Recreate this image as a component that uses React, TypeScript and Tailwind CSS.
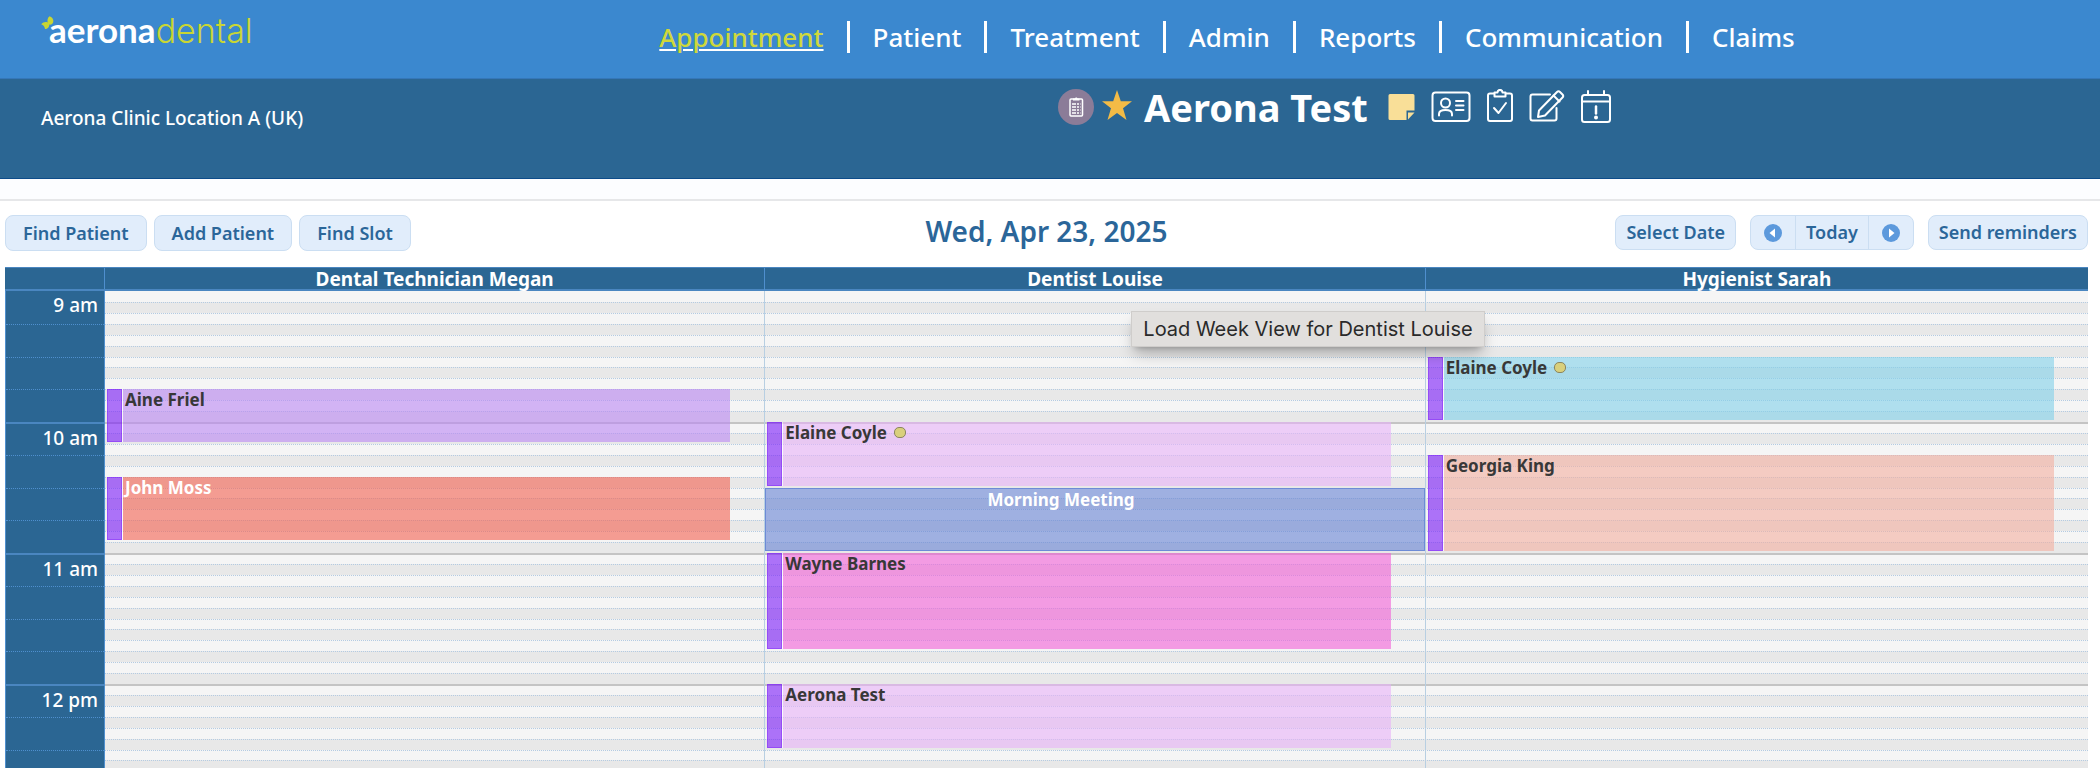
import { Fragment } from 'react';
import type { ReactNode } from 'react';

interface CalendarEvent {
  name: string;
  start: number;
  end: number;
  color: string;
  light?: boolean;
  flagged?: boolean;
  block?: boolean;
}

interface Provider {
  name: string;
  tooltip?: string;
  events: CalendarEvent[];
}

const NAV_ITEMS = ['Appointment', 'Patient', 'Treatment', 'Admin', 'Reports', 'Communication', 'Claims'];

const HOURS = ['9 am', '10 am', '11 am', '12 pm'];
const SLOTS_PER_HOUR = 12;
const SLOTS = Array.from({ length: SLOTS_PER_HOUR }, (_, i) => i);

// start and end are counted in five minute slots from 9 am
const PROVIDERS: Provider[] = [
  {
    name: 'Dental Technician Megan',
    events: [
      { name: 'Aine Friel', start: 9, end: 14, color: 'bg-[#ba87f3]/60' },
      { name: 'John Moss', start: 17, end: 23, color: 'bg-[#f36050]/60', light: true },
    ],
  },
  {
    name: 'Dentist Louise',
    tooltip: 'Load Week View for Dentist Louise',
    events: [
      { name: 'Elaine Coyle', start: 12, end: 18, color: 'bg-[#e7b2f8]/60', flagged: true },
      { name: 'Morning Meeting', start: 18, end: 24, color: 'bg-[#6582d3]/60', block: true },
      { name: 'Wayne Barnes', start: 24, end: 33, color: 'bg-[#f15fd7]/60' },
      { name: 'Aerona Test', start: 36, end: 42, color: 'bg-[#e7b2f8]/60' },
    ],
  },
  {
    name: 'Hygienist Sarah',
    events: [
      { name: 'Elaine Coyle', start: 6, end: 12, color: 'bg-[#80d0e9]/60', flagged: true },
      { name: 'Georgia King', start: 15, end: 24, color: 'bg-[#f3afa0]/60' },
    ],
  },
];

function Logo() {
  return (
    <a href="#" className="flex items-baseline leading-[34px]">
      <svg width="13" height="14" viewBox="0 0 13 14" className="-mr-[5px] self-start mt-1" fill="#c9d633">
        <path d="M8.5 0.3C11.5 1.2 13 4 12 6.8C11.2 8.6 9 9.2 7.4 8.2C5.8 5.6 6.2 2 8.5 0.3Z" />
        <path d="M0.2 8.2C2.6 5.6 6 5.4 8 7.4C9 10 7.2 12.8 4 13C3.8 10.6 2.4 9 0.2 8.2Z" />
      </svg>
      <span className="font-['Lato',sans-serif] text-[35px] font-bold text-white">aerona</span>
      <span className="font-['Inter',sans-serif] text-[34px] font-light text-[#c9d633]">dental</span>
    </a>
  );
}

function Header() {
  return (
    <header className="flex h-[79px] shrink-0 border-b border-[#3577b8] bg-[#3b88cf]">
      <div className="w-1/6 pl-[41px] pt-3">
        <Logo />
      </div>
      <nav className="flex flex-1 items-start justify-center gap-[23px] pl-1 pt-[21px] text-[26px] font-medium leading-8 text-white">
        {NAV_ITEMS.map((item, index) => (
          <Fragment key={item}>
            {index > 0 && <span className="h-8 w-[3px] bg-white" />}
            <a
              href="#"
              className={
                index === 0
                  ? 'text-[#cfd83a] underline decoration-white decoration-2 underline-offset-2'
                  : ''
              }
            >
              {item}
            </a>
          </Fragment>
        ))}
      </nav>
    </header>
  );
}

function IconButton({ label, children }: { label: string; children: ReactNode }) {
  return (
    <button type="button" aria-label={label} className="flex items-center">
      {children}
    </button>
  );
}

function PatientBar() {
  return (
    <section className="flex h-[100px] shrink-0 border-b border-[#0d4c8a] bg-[#2b6693] text-white">
      <div className="w-1/2 pl-[41px] pt-[27px] text-[19px] font-medium leading-6">
        Aerona Clinic Location A (UK)
      </div>
      <div className="flex h-[56px] items-center pl-2">
        <IconButton label="Treatment plan">
          <svg width="36" height="36" viewBox="0 0 36 36" fill="none">
            <circle cx="18" cy="18" r="18" fill="#8b7c98" />
            <rect x="12" y="10" width="12.500" height="17" rx="1" stroke="#fff" strokeWidth="1.500" />
            <path d="M15 11.500V9.500H17C17 8 19.500 8 19.500 9.500H21.500V11.500Z" fill="#fff" />
            <path
              d="M14 15H22.500M14 18H22.500M14 21H22.500M14 24H22.500"
              stroke="#fff"
              strokeWidth="1.500"
              strokeDasharray="4 1 2 1"
            />
          </svg>
        </IconButton>
        <svg width="32" height="32" viewBox="0 0 32 32" fill="#f3bb46" className="ml-[7px] mb-1">
          <path d="M16 1L19.800 12.200H31L22 19.200L25.500 31L16 24L6.500 31L10 19.200L1 12.200H12.200Z" />
        </svg>
        <h1 className="ml-[11px] text-[38px] font-bold leading-10">Aerona Test</h1>
        <div className="ml-5 flex items-center gap-4">
          <IconButton label="Notes">
            <svg width="27" height="36" viewBox="0 0 27 36">
              <path d="M2 5H25Q26.500 5 26.500 6.500V21.500H18.500V31H2Q0.500 31 0.500 29.500V6.500Q0.500 5 2 5Z" fill="#f9df98" />
              <path d="M20 23.500H26.500L20 30.500Z" fill="#f9df98" />
            </svg>
          </IconButton>
          <IconButton label="Patient details">
            <svg width="40" height="36" viewBox="0 0 40 36" fill="none" stroke="#fff" strokeWidth="2" strokeLinecap="round">
              <rect x="1.500" y="3.500" width="37" height="28.500" rx="3" />
              <circle cx="14.500" cy="14" r="4.500" />
              <path d="M8 26.500V25C8 21.500 10.500 21 14.500 21C18.500 21 21 21.500 21 25V26.500" />
              <path d="M25 12H32.500M25 16.500H32.500M25 21H32.500" />
            </svg>
          </IconButton>
          <IconButton label="Tasks">
            <svg width="26" height="36" viewBox="0 0 26 36" fill="none" stroke="#fff" strokeWidth="2" strokeLinejoin="round" strokeLinecap="round">
              <path d="M7 4.500H3Q1 4.500 1 6.500V30Q1 32 3 32H23Q25 32 25 30V6.500Q25 4.500 23 4.500H19" />
              <path d="M7.500 7.500V3.500H10.500C10.500 0 15.500 0 15.500 3.500H18.500V7.500Z" />
              <path d="M7 19L11.500 24L19 14" />
            </svg>
          </IconButton>
          <IconButton label="Edit">
            <svg width="36" height="36" viewBox="0 0 36 36" fill="none" stroke="#fff" strokeWidth="2" strokeLinejoin="round" strokeLinecap="round">
              <path d="M21 5.500H3.500Q1.500 5.500 1.500 7.500V29.500Q1.500 31.500 3.500 31.500H25.500Q27.500 31.500 27.500 29.500V19" />
              <path d="M10 21.500L28 3Q29.500 1.500 31 3L33.500 5.500Q35 7 33.500 8.500L16 26.500L9 28Z" />
              <path d="M24.500 6.500L30.500 12.500" />
            </svg>
          </IconButton>
          <IconButton label="Alerts">
            <svg width="30" height="36" viewBox="0 0 30 36" fill="none" stroke="#fff" strokeWidth="2" strokeLinecap="round">
              <rect x="1" y="6" width="28" height="27" rx="2.500" />
              <path d="M1 12.500H29M7 2V6M23 2V6" />
              <path d="M15 17.500V24.500" strokeWidth="2.500" />
              <circle cx="15" cy="28.500" r="1" fill="#fff" />
            </svg>
          </IconButton>
        </div>
      </div>
    </section>
  );
}

function ToolbarButton({ children }: { children: ReactNode }) {
  return (
    <button type="button" className="h-9 rounded-lg border border-[#cbdef2] bg-[#e1edfb] px-[17px]">
      {children}
    </button>
  );
}

function Arrow({ flip }: { flip?: boolean }) {
  return (
    <svg width="18" height="18" viewBox="0 0 18 18" className={flip ? 'rotate-180' : ''}>
      <circle cx="9" cy="9" r="9" fill="#5c99dc" />
      <path d="M11 4.500V13.500L5.500 9Z" fill="#fff" />
    </svg>
  );
}

function Toolbar() {
  return (
    <div className="grid h-[66px] shrink-0 grid-cols-3 items-start pl-[5px] pr-3 pt-[14px] text-[18px] font-semibold text-[#2b6699]">
      <div className="flex gap-[7px]">
        <ToolbarButton>Find Patient</ToolbarButton>
        <ToolbarButton>Add Patient</ToolbarButton>
        <ToolbarButton>Find Slot</ToolbarButton>
      </div>
      <h2 className="text-center text-[28px] font-semibold leading-8">Wed, Apr 23, 2025</h2>
      <div className="flex justify-end gap-[14px] *:h-[35px] [&_button]:px-[10px]">
        <ToolbarButton>Select Date</ToolbarButton>
        <div className="flex overflow-hidden rounded-lg border border-[#cbdef2] bg-[#e1edfb]">
          <button type="button" aria-label="Previous day" className="flex w-11 items-center justify-center">
            <Arrow />
          </button>
          <button type="button" className="border-x border-[#cbdef2]">
            Today
          </button>
          <button type="button" aria-label="Next day" className="flex w-11 items-center justify-center">
            <Arrow flip />
          </button>
        </div>
        <ToolbarButton>Send reminders</ToolbarButton>
      </div>
    </div>
  );
}

function EventCard({ event }: { event: CalendarEvent }) {
  const rows = { gridRow: `${event.start + 1} / ${event.end + 1}` };

  if (event.block) {
    return (
      <div
        style={rows}
        className={`mb-[2px] border border-[#6d8bd6] pr-[68px] text-center text-white ${event.color}`}
      >
        {event.name}
      </div>
    );
  }

  return (
    <div style={rows} className="mb-[2px] ml-[2px] mr-[34px] flex">
      <div className="w-[15px] border border-[#7b1afa]/40 bg-[#7b1afa]/60" />
      <div className="w-px bg-white/60" />
      <div className={`flex flex-1 items-start gap-[7px] pl-[2px] ${event.color} ${event.light ? 'text-white' : 'text-[#383838]'}`}>
        {event.name}
        {event.flagged && (
          <span className="mt-[5px] h-[11px] w-3 rounded-[5px] border border-[#8a8560] bg-[#d9d07c]" />
        )}
      </div>
    </div>
  );
}

function Calendar() {
  return (
    <div className="ml-[5px] mr-3 flex min-h-0 flex-1 flex-col">
      <div className="flex h-6 shrink-0 border-b-2 border-t border-[#4a86c0] bg-[#2b6693] text-[19px] font-bold leading-[22px] text-white">
        <div className="w-[100px] border-r border-[#4f8fce]" />
        <div className="grid flex-1 grid-cols-[659fr_660fr_663fr]">
          {PROVIDERS.map((provider, index) => (
            <div
              key={provider.name}
              className={`relative text-center ${index > 0 ? 'border-l border-[#4f8fce]' : ''}`}
            >
              <a href="#">{provider.name}</a>
              {provider.tooltip && (
                <div
                  role="tooltip"
                  className="absolute left-[366px] top-[43px] z-10 whitespace-nowrap border border-[#cfcdcb] bg-[#e1dfdd] px-[11px] py-[5px] font-['Inter',sans-serif] text-[20px] font-normal leading-6 text-[#2a2a2a] shadow-lg shadow-black/25"
                >
                  {provider.tooltip}
                </div>
              )}
            </div>
          ))}
        </div>
      </div>

      <div className="flex min-h-0 flex-1 overflow-y-auto [scrollbar-width:none]">
        <div className="h-max w-[100px] shrink-0 border-x border-[#4f8fce] bg-[#2b6693]">
          {HOURS.map((hour, index) => (
            <div key={hour} className="grid h-[131px] grid-rows-4 text-right text-[19px] font-medium text-white">
              <div className={`pr-[6px] leading-[29px] ${index > 0 ? 'border-t-2 border-[#4a86c0]' : ''}`}>{hour}</div>
              <div className="border-t border-dotted border-[#4f8fce]" />
              <div className="border-t border-dotted border-[#4f8fce]" />
              <div className="border-t border-dotted border-[#4f8fce]" />
            </div>
          ))}
        </div>

        <div className="relative h-max flex-1">
          {HOURS.map((hour, index) => (
            <div key={hour} className="grid h-[131px] grid-rows-12">
              {SLOTS.map((slot) => (
                <div
                  key={slot}
                  className={`${slot % 2 === 0 ? 'bg-[#f5f5f5]' : 'bg-[#e8e8e8]'} ${
                    slot > 0
                      ? 'border-t border-dotted border-[#b4cbe2]'
                      : index > 0
                        ? 'border-t-2 border-[#c4c4c4]'
                        : ''
                  }`}
                />
              ))}
            </div>
          ))}

          <div className="absolute inset-0 grid grid-cols-[659fr_660fr_663fr] text-[17px] font-bold leading-[22px]">
            {PROVIDERS.map((provider, index) => (
              <div
                key={provider.name}
                style={{ gridTemplateRows: `repeat(${HOURS.length * SLOTS_PER_HOUR}, minmax(0, 1fr))` }}
                className={`grid ${index > 0 ? 'border-l border-[#b8cfe2]' : ''}`}
              >
                {provider.events.map((event) => (
                  <EventCard key={event.start} event={event} />
                ))}
              </div>
            ))}
          </div>
        </div>
      </div>
    </div>
  );
}

export default function App() {
  return (
    <div className="flex h-screen flex-col bg-white font-['Noto_Sans',sans-serif]">
      <Header />
      <PatientBar />
      <div className="h-[22px] shrink-0 border-b-2 border-[#e6e7e9] bg-[#fcfdff]" />
      <Toolbar />
      <Calendar />
    </div>
  );
}
